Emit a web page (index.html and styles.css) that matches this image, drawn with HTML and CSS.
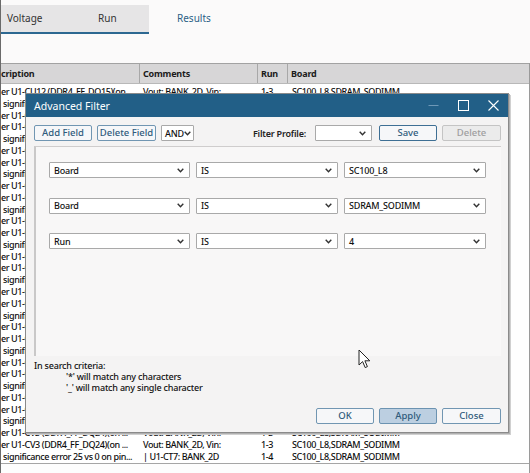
FILE: index.html
```html
<!DOCTYPE html>
<html>
<head>
<meta charset="utf-8">
<link rel="stylesheet" href="styles.css">
</head>
<body>
<div class="app">
  <div class="top">
    <div class="tabs">
      <div class="tabgroup">
        <div class="tab tab-voltage">Voltage</div>
        <div class="tab tab-run">Run</div>
      </div>
      <div class="tab tab-results">Results</div>
    </div>
  </div>
  <div class="grid">
    <div class="thead">
      <div class="c1">cription</div>
      <div class="c2">Comments</div>
      <div class="c3">Run</div>
      <div class="c4">Board</div>
    </div>
    <div class="tbody" id="tbody"></div>
  </div>
  <div class="hscroll"></div>

  <div class="dialog">
    <div class="titlebar">
      <span class="title">Advanced Filter</span>
      <div class="winctl">
        <span class="ctl"><svg width="11" height="11" viewBox="0 0 11 11"><line x1="0.5" y1="5.5" x2="10.5" y2="5.5" stroke="#6e98b7" stroke-width="1"/></svg></span>
        <span class="ctl"><svg width="11" height="11" viewBox="0 0 11 11"><rect x="0.5" y="0.5" width="10" height="10" fill="none" stroke="#ffffff" stroke-width="1"/></svg></span>
        <span class="ctl"><svg width="11" height="11" viewBox="0 0 11 11"><path d="M0.5 0.5 L10.5 10.5 M10.5 0.5 L0.5 10.5" stroke="#ffffff" stroke-width="1.1" fill="none"/></svg></span>
      </div>
    </div>
    <div class="dbody">
      <div class="toolbar">
        <button class="btn w-add">Add Field</button>
        <button class="btn w-del">Delete Field</button>
        <div class="sel w-and"><span>AND</span><svg class="chev" width="7" height="5" viewBox="0 0 7 5"><path d="M0.7 0.8 L3.5 3.8 L6.3 0.8" fill="none" stroke="#333" stroke-width="1.4"/></svg></div>
        <div class="spacer"></div>
        <span class="plabel">Filter Profile:</span>
        <div class="sel w-prof"><span></span><svg class="chev" width="7" height="5" viewBox="0 0 7 5"><path d="M0.7 0.8 L3.5 3.8 L6.3 0.8" fill="none" stroke="#333" stroke-width="1.4"/></svg></div>
        <button class="btn btn-save w-save">Save</button>
        <button class="btn btn-dis w-delp">Delete</button>
      </div>
      <div class="panel">
        <div class="frow">
          <div class="sel w-f1"><span>Board</span><svg class="chev" width="7" height="5" viewBox="0 0 7 5"><path d="M0.7 0.8 L3.5 3.8 L6.3 0.8" fill="none" stroke="#333" stroke-width="1.4"/></svg></div>
          <div class="sel w-f2"><span>IS</span><svg class="chev" width="7" height="5" viewBox="0 0 7 5"><path d="M0.7 0.8 L3.5 3.8 L6.3 0.8" fill="none" stroke="#333" stroke-width="1.4"/></svg></div>
          <div class="sel w-f3"><span>SC100_L8</span><svg class="chev" width="7" height="5" viewBox="0 0 7 5"><path d="M0.7 0.8 L3.5 3.8 L6.3 0.8" fill="none" stroke="#333" stroke-width="1.4"/></svg></div>
        </div>
        <div class="frow">
          <div class="sel w-f1"><span>Board</span><svg class="chev" width="7" height="5" viewBox="0 0 7 5"><path d="M0.7 0.8 L3.5 3.8 L6.3 0.8" fill="none" stroke="#333" stroke-width="1.4"/></svg></div>
          <div class="sel w-f2"><span>IS</span><svg class="chev" width="7" height="5" viewBox="0 0 7 5"><path d="M0.7 0.8 L3.5 3.8 L6.3 0.8" fill="none" stroke="#333" stroke-width="1.4"/></svg></div>
          <div class="sel w-f3"><span>SDRAM_SODIMM</span><svg class="chev" width="7" height="5" viewBox="0 0 7 5"><path d="M0.7 0.8 L3.5 3.8 L6.3 0.8" fill="none" stroke="#333" stroke-width="1.4"/></svg></div>
        </div>
        <div class="frow">
          <div class="sel w-f1"><span>Run</span><svg class="chev" width="7" height="5" viewBox="0 0 7 5"><path d="M0.7 0.8 L3.5 3.8 L6.3 0.8" fill="none" stroke="#333" stroke-width="1.4"/></svg></div>
          <div class="sel w-f2"><span>IS</span><svg class="chev" width="7" height="5" viewBox="0 0 7 5"><path d="M0.7 0.8 L3.5 3.8 L6.3 0.8" fill="none" stroke="#333" stroke-width="1.4"/></svg></div>
          <div class="sel w-f3"><span>4</span><svg class="chev" width="7" height="5" viewBox="0 0 7 5"><path d="M0.7 0.8 L3.5 3.8 L6.3 0.8" fill="none" stroke="#333" stroke-width="1.4"/></svg></div>
        </div>
      </div>
      <div class="help">
        <div>In search criteria:</div>
        <div class="ind">'*' will match any characters</div>
        <div class="ind">'_' will match any single character</div>
      </div>
      <div class="actions">
        <button class="btn w-ok">OK</button>
        <button class="btn btn-apply w-apply">Apply</button>
        <button class="btn w-close">Close</button>
      </div>
    </div>
  </div>

  <svg class="cursor" width="13" height="21" viewBox="0 0 13 21"><path d="M1 1 L1 16 L4.6 12.6 L7.2 18.6 L9.4 17.6 L6.9 11.8 L11.8 11.8 Z" fill="#ffffff" stroke="#222" stroke-width="1" stroke-linejoin="round"/></svg>
</div>
<script>
  var tb = document.getElementById('tbody');
  var html = '';
  for (var j = 0; j < 32; j++) {
    var sig = (j % 3 === 1);
    var c1, c2, c3, c4 = 'SC100_L8,SDRAM_SODIMM';
    if (j === 0) { c1 = 'er U1-CU12 (DDR4_FF_DQ15)(on ...'; c2 = 'Vout: BANK_2D, Vin:'; c3 = '1-3'; }
    else if (sig) { c1 = 'significance error 25 vs 0 on pin...'; c2 = '| U1-CT7: BANK_2D'; c3 = '1-4'; }
    else { c1 = 'er U1-CV3 (DDR4_FF_DQ24)(on ...'; c2 = 'Vout: BANK_2D, Vin:'; c3 = '1-3'; }
    html += '<div class="row"><div class="c1' + (sig ? ' sig' : '') + '">' + c1 + '</div><div class="c2">' + c2 + '</div><div class="c3">' + c3 + '</div><div class="c4">' + c4 + '</div></div>';
  }
  tb.innerHTML = html;
</script>
</body>
</html>
```

FILE: styles.css
```css
* { box-sizing: border-box; }
html, body { margin: 0; padding: 0; }
body {
  width: 530px;
  height: 473px;
  overflow: hidden;
  font-family: "Noto Sans", "Open Sans", sans-serif;
  color: #1b1b1b;
  background: #ffffff;
}
.app {
  position: relative;
  width: 530px;
  height: 473px;
  border-left: 1px solid #6a6a6a;
  background: #fbfafa;
}
.top { height: 63px; padding-top: 5px; }
.tabs { display: flex; align-items: stretch; height: 29px; }
.tabgroup {
  display: flex;
  width: 148px;
  background: #e6e5e6;
  border-bottom: 2px solid #2d6891;
}
.tab { font-size: 10px; line-height: 27px; color: #333; }
.tab-voltage { padding-left: 6px; width: 97px; }
.tab-results { padding-left: 28px; color: #2b5f86; }

.grid { border-right: 1px solid #9a9a9a; background: #fff; }
.thead {
  display: flex;
  height: 21px;
  background: #d7d6d7;
  border-top: 1px solid #a2a2a2;
  border-bottom: 1px solid #b8b8b8;
  font-size: 9px;
  font-weight: 700;
  line-height: 19px;
  letter-spacing: -0.2px;
}
.thead > div { border-right: 1px solid #a8a8a8; padding-left: 3px; }
.thead .c1 { padding-left: 0; }
.thead .c4 { border-right: none; }
.c1 { width: 139px; white-space: nowrap; overflow: hidden; }
.c2 { width: 118px; white-space: nowrap; overflow: hidden; padding-left: 3px; }
.c3 { width: 30px; padding-left: 3px; }
.c4 { flex: 1; padding-left: 4px; white-space: nowrap; }
.tbody { padding-top: 2px; border-bottom: 1px solid #a5a5a5; }
.row {
  display: flex;
  height: 11.77px;
  font-size: 9px;
  font-weight: 500;
  line-height: 11.77px;
  letter-spacing: -0.4px;
  color: #0d0d0d;
}
.row .c1 { padding-left: 0; }
.row .c1.sig { padding-left: 2px; }
.hscroll {
  height: 10px;
  border-right: 1px solid #9a9a9a;
  border-bottom: 1px solid #8c8c8c;
  background: #fdfdfd;
}

.dialog {
  position: absolute;
  left: 24px;
  top: 93px;
  width: 484px;
  height: 340px;
  background: #f4f3f3;
  border: 1px solid #8a8a8a;
  box-shadow: 1px 1px 0 #b0b0b0, 2px 2px 0 #d0d0d0;
  display: flex;
  flex-direction: column;
}
.titlebar {
  height: 23px;
  background: #225f87;
  display: flex;
  align-items: center;
  color: #fff;
  flex: none;
}
.title { font-size: 10.5px; padding-left: 8px; }
.winctl { margin-left: auto; display: flex; height: 100%; }
.ctl { width: 30px; display: flex; align-items: center; justify-content: center; }

.dbody {
  flex: 1;
  display: flex;
  flex-direction: column;
  padding: 8px 7px 8px 8px;
  letter-spacing: -0.2px;
}
.toolbar { display: flex; align-items: center; height: 16px; gap: 5px; }
.spacer { flex: 1; }
.plabel { font-size: 9px; font-weight: 600; color: #222; }

.btn {
  height: 16px;
  padding: 0;
  border: 1px solid #7196b2;
  border-radius: 2px;
  background: #f6f7f9;
  color: #2f5b7c;
  font-family: "Noto Sans", "Open Sans", sans-serif;
  font-size: 9.5px;
  font-weight: 500;
  line-height: 14px;
  text-align: center;
}
.btn-save { border: 1.5px solid #3e6f94; }
.btn-dis { background: #ebebeb; border-color: #c4c4c4; color: #9e9e9e; }
.btn-apply { background: #bccfe1; border-color: #6c93b1; }

.sel {
  height: 16px;
  display: flex;
  align-items: center;
  background: #fff;
  border: 1px solid #a9a9a9;
  border-radius: 1px;
  font-size: 9px;
  font-weight: 500;
  padding: 0 5px 0 4px;
  color: #111;
}
.sel span { flex: 1; }
.chev { flex: none; }

.w-add { width: 58px; }
.w-del { width: 59px; }
.w-and { width: 33px; padding: 0 2px 0 3px; }
.w-prof { width: 57px; margin-left: 4px; margin-right: 2px; }
.w-save { width: 58px; }
.w-delp { width: 59px; }

.panel {
  margin-top: 5px;
  height: 210px;
  border-top: 1px solid #cfcdcd;
  border-left: 2px solid #c9c8c8;
  background: #f8f7f7;
  padding: 15px 0 0 13px;
  display: flex;
  flex-direction: column;
  gap: 19.5px;
}
.frow { display: flex; gap: 6px; }
.w-f1 { width: 141px; }
.w-f2 { width: 142px; }
.w-f3 { width: 142px; }

.help {
  margin-top: 5px;
  font-size: 9px;
  font-weight: 500;
  line-height: 10.8px;
  color: #111;
}
.help .ind { padding-left: 32px; }

.actions {
  margin-top: auto;
  display: flex;
  justify-content: flex-end;
  gap: 5px;
}
.w-ok { width: 58px; }
.w-apply { width: 58px; }
.w-close { width: 59px; }

.cursor { position: absolute; left: 357px; top: 349px; }
```
